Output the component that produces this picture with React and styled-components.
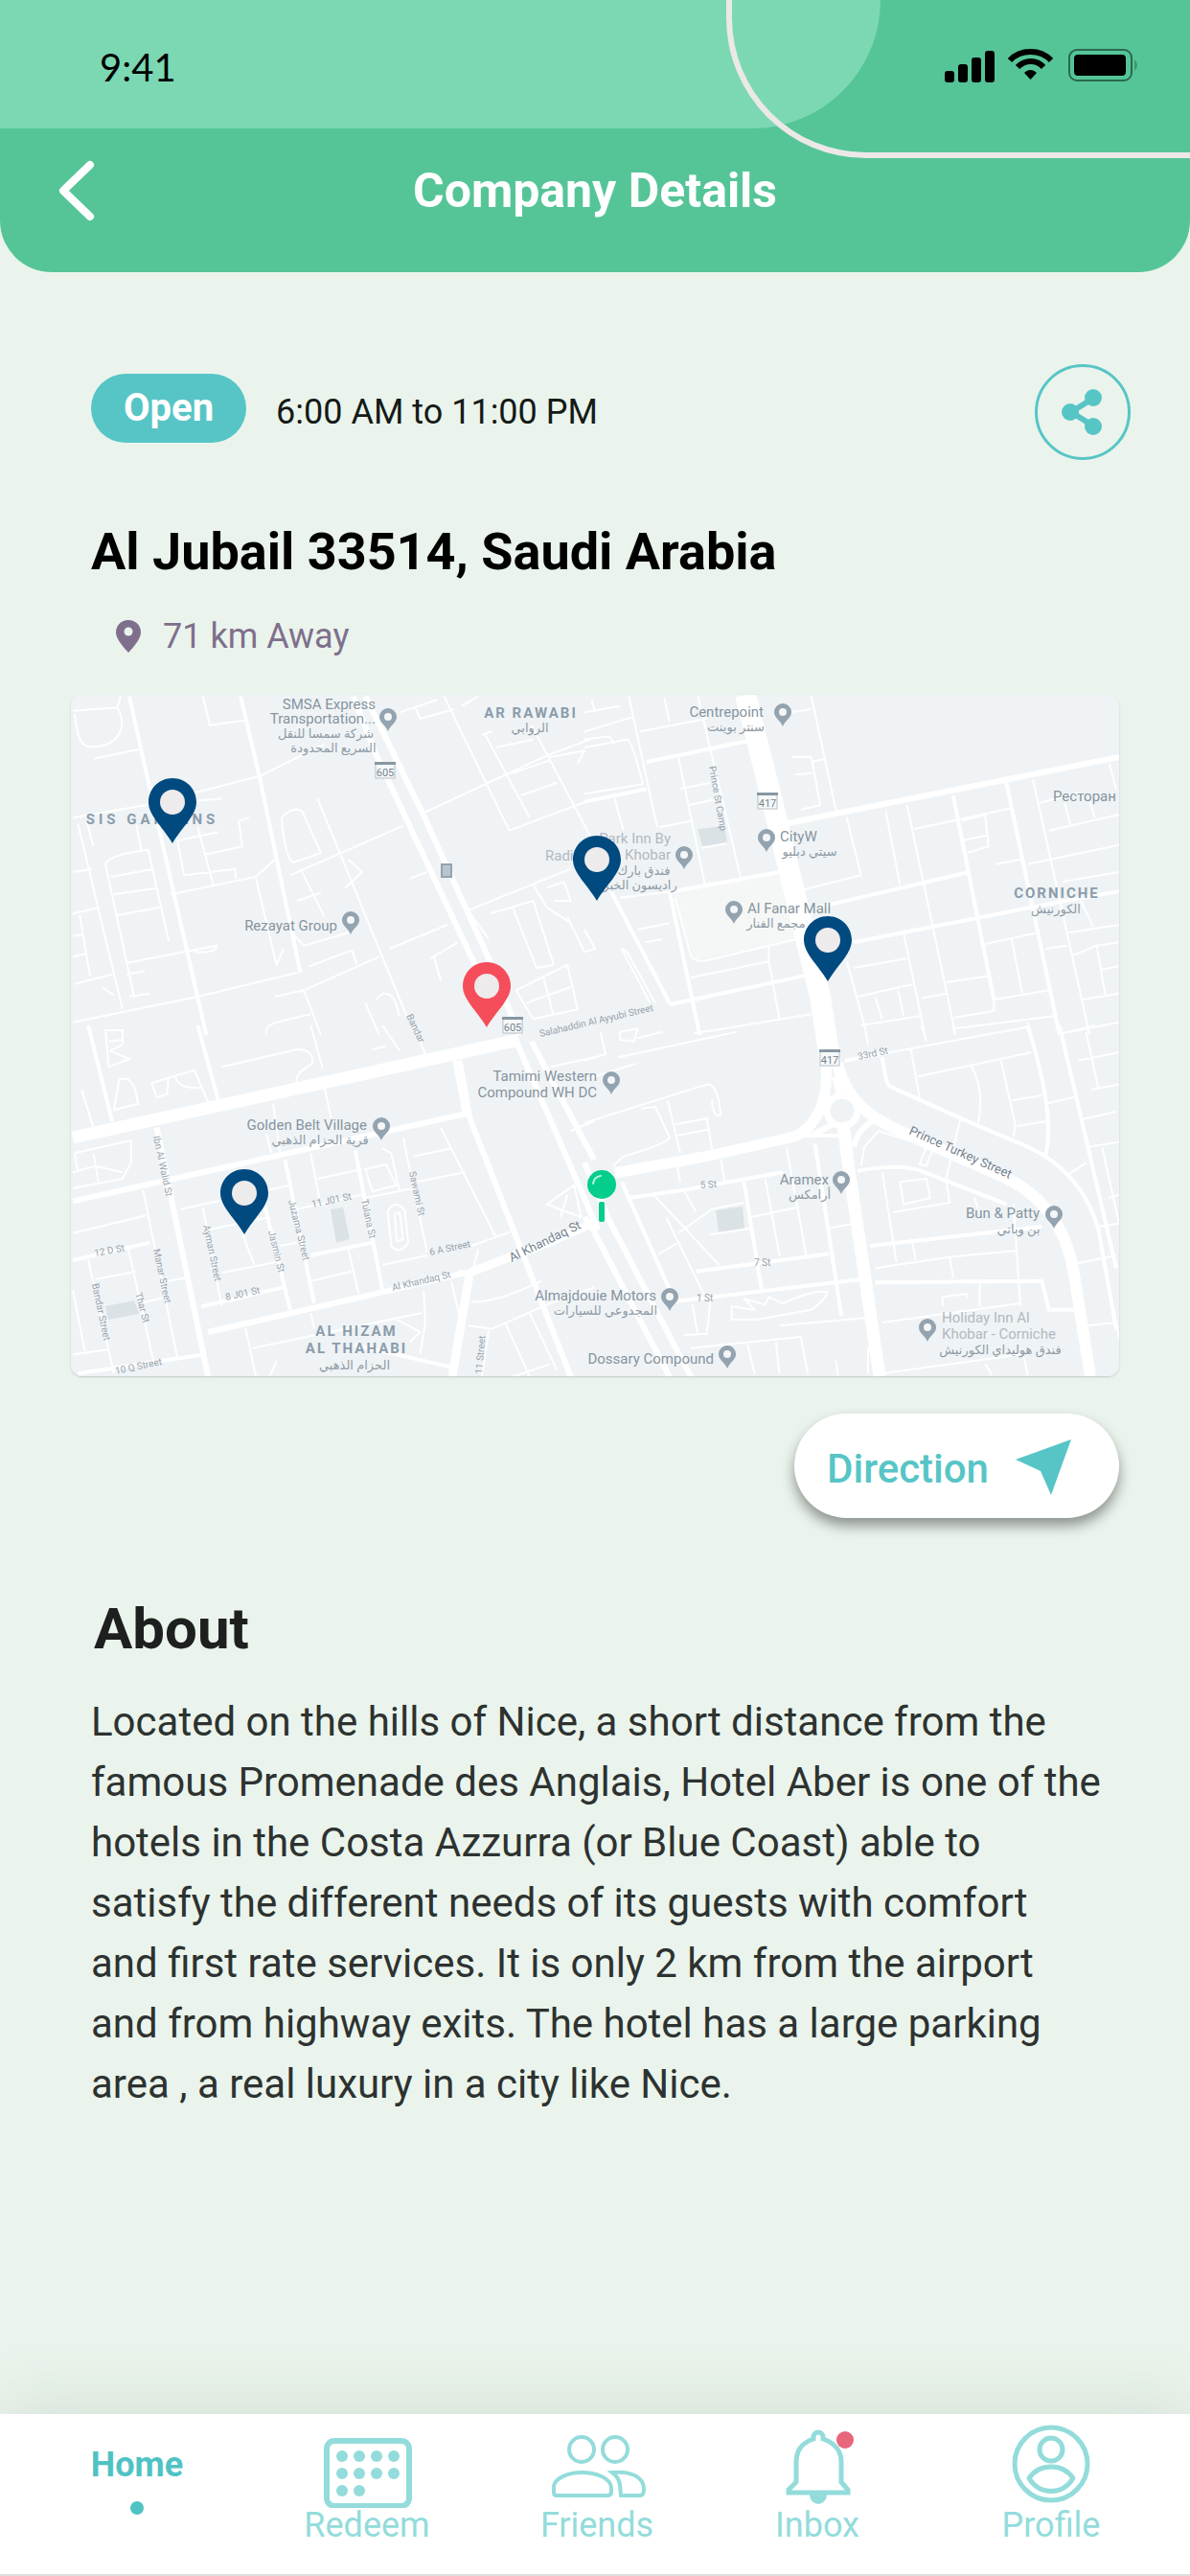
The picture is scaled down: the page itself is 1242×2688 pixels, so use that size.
import React from "react";
import styled, { createGlobalStyle } from "styled-components";

const navItems = [
  { name: "Home", active: true },
  { name: "Redeem", icon: <RedeemIcon /> },
  { name: "Friends", icon: <FriendsIcon /> },
  { name: "Inbox", icon: <InboxIcon /> },
  { name: "Profile", icon: <ProfileIcon /> },
];

function App() {
  return (
    <>
      <GlobalStyle />
      <Page>
        <Header>
          <HeaderTint />
          <HeaderOutline />
          <StatusBar>
            <Time>9:41</Time>
            <StatusIcons />
          </StatusBar>
          <TitleBar>
            <BackButton type="button" aria-label="Back">
              <svg width="40" height="64" viewBox="0 0 40 64">
                <path d="M34 5 L6 32 L34 59" fill="none" stroke="#fff" strokeWidth="8" strokeLinecap="round" strokeLinejoin="round" />
              </svg>
            </BackButton>
            <Title>Company Details</Title>
          </TitleBar>
        </Header>

        <Main>
          <HoursRow>
            <OpenBadge>Open</OpenBadge>
            <Hours>6:00 AM to 11:00 PM</Hours>
            <ShareButton type="button" aria-label="Share">
              <svg width="44" height="50" viewBox="0 0 44 50">
                <path d="M34 10 L10 25 L34 40" fill="none" stroke="#57c5c6" strokeWidth="6" />
                <circle cx="9" cy="25" r="9" fill="#57c5c6" />
                <circle cx="33" cy="10" r="9" fill="#57c5c6" />
                <circle cx="33" cy="40" r="9" fill="#57c5c6" />
              </svg>
            </ShareButton>
          </HoursRow>

          <Address>Al Jubail 33514, Saudi Arabia</Address>
          <Distance>
            <svg width="26" height="34" viewBox="0 0 26 34">
              <path d="M13 0 C5.500 0 0 5.500 0 13 C0 21 13 34 13 34 C13 34 26 21 26 13 C26 5.500 20.500 0 13 0 Z" fill="#7f6f8c" />
              <circle cx="13" cy="12" r="4.500" fill="#eaf4ec" />
            </svg>
            71 km Away
          </Distance>

          <MapFrame>
            <CityMap />
          </MapFrame>

          <Actions>
            <DirectionButton type="button">
              <DirectionLabel>Direction</DirectionLabel>
              <svg width="58" height="58" viewBox="0 0 58 58">
                <path d="M0 21 L58 0 L37 58 L26 33 Z" fill="#57c5c6" />
              </svg>
            </DirectionButton>
          </Actions>

          <AboutTitle>About</AboutTitle>
          <AboutText>
            Located on the hills of Nice, a short distance from the famous
            Promenade des Anglais, Hotel Aber is one of the hotels in the Costa
            Azzurra (or Blue Coast) able to satisfy the different needs of its
            guests with comfort and first rate services. It is only 2 km from
            the airport and from highway exits. The hotel has a large parking
            area , a real luxury in a city like Nice.
          </AboutText>
        </Main>

        <Nav>
          {navItems.map((item) => (
            <NavLink key={item.name} href={`#${item.name.toLowerCase()}`} $active={item.active}>
              {item.icon}
              <span>{item.name}</span>
              {item.active && <ActiveDot />}
            </NavLink>
          ))}
        </Nav>
      </Page>
    </>
  );
}

function StatusIcons() {
  return (
    <svg width="206" height="40" viewBox="0 0 206 40">
      <rect x="0" y="24" width="10" height="12" rx="3" />
      <rect x="14" y="17" width="10" height="19" rx="3" />
      <rect x="28" y="10" width="10" height="26" rx="3" />
      <rect x="42" y="3" width="10" height="33" rx="3" />
      <g fill="none" stroke="#000" strokeWidth="6">
        <path d="M68 13 C79 1 100 1 111 13" />
        <path d="M76 20 C84 12 96 12 103 20" />
      </g>
      <path d="M83 26 C87 22 92 22 96 26 L89.500 33 Z" />
      <rect x="130" y="2" width="65" height="32" rx="8" fill="none" stroke="#2b6850" strokeWidth="2" />
      <rect x="135" y="7" width="54" height="22" rx="4" />
      <path d="M198 12 Q204 18 198 24 Z" fill="#3f9573" />
    </svg>
  );
}

// Roads are kept per quadrant, each with its own origin
const quadrants = [
  {
    transform: "translate(60 710) scale(0.35714 0.33333)",
    minor: `M45 95 L175 85 L185 50 M50 105 C60 200 70 215 130 205 C190 190 200 130 175 85 M105 245 L240 215
      M425 50 L445 140 L550 125 M45 430 L260 390 L590 300 L780 200 M60 450 L190 1030
      M225 995 L140 575 Q150 545 265 530 L325 815 M155 615 L280 590 M165 670 L290 650 M175 735 L300 710
      M50 950 L160 920 M45 1070 L410 990 L700 915 M200 885 L465 830 Q465 855 400 850 M330 670 L580 615 L635 560
      M45 600 L100 590 M45 730 L120 712 M65 735 L95 925 M350 500 L370 610 L520 590 L520 620 M410 460 L455 640
      M430 545 L540 520 L530 440 L560 430 M355 500 L470 475 M270 390 L480 370 M85 440 L105 520 M230 450 L245 530
      M655 430 Q690 390 715 410 L770 540 L690 570 Q665 560 655 430 M680 610 L1010 455 M760 370 L1020 1050
      M710 590 L780 740 M700 690 L770 665 M580 620 L640 890 L660 840 M850 560 L890 600 L840 650 M735 895 L860 845 L875 890
      M685 790 L720 830 L850 790 M635 990 L720 970 L940 865 M720 970 L770 1110 M610 1110 Q605 1080 640 1070 L740 1045
      M1060 420 L1430 235 L1568 180 M1130 50 L1320 470 L1568 370 M1250 170 L1380 430 M1240 170 L1270 160
      M1280 210 L1390 185 M1330 290 L1440 250 M1355 360 L1460 320 M1385 140 L1568 510 M1440 240 L1540 220 L1520 260
      M970 840 L1140 765 M1030 620 L1080 600 M1200 720 L1500 590 M1200 720 L1260 810 M1340 970 L1490 890 L1520 1030 L1390 1060 Z
      M1370 1010 L1500 960 M1420 930 L1450 1050 M1090 870 L1170 820 M1100 865 L1120 940 M1265 730 L1390 690 L1450 890 L1400 900 L1330 710
      M1390 640 L1430 710 L1500 760 M1430 650 L1480 630 L1500 690 L1450 690 M1490 740 L1540 850 M900 1010 L940 1110
      M930 1000 Q960 960 985 1000 L1000 1050 M45 800 L75 795 M45 865 L85 855 M130 960 L165 985 M200 920 L255 910 M210 990 L270 980
      M1000 100 L1110 60 M1045 85 L1060 120 L1160 90 M1180 80 L1230 50`,
    medium: "M210 50 L270 340 L330 620 L435 1110 M535 50 L590 300 L710 915",
    major: "M865 50 L930 230 L1220 890 M900 50 L1060 400 L1260 870 L1350 1110",
  },
  {
    transform: "translate(610 710) scale(0.37 0.33333)",
    minor: `M125 50 L205 460 M0 100 L100 80 M155 160 L345 120 M225 55 L240 130 M320 50 L440 615 M85 370 L110 470
      M0 210 L120 185 Q135 190 165 325 L0 355 M0 185 L70 175 L85 200 M265 240 L340 640 M270 340 L355 320 M295 390 L380 370
      M330 525 L400 510 M210 460 L300 440 M640 50 L710 410 M580 100 L640 90 M585 240 L640 240 L665 390 L610 405 M595 295 L645 290 M640 255 L680 245
      M740 430 L780 610 L600 660 M850 410 L890 640 M910 390 L1045 1100 M930 465 L1205 400 M1280 385 L1400 350 M1265 310 L1425 1110
      M1480 260 L1500 340 M1310 470 L1508 420 M1160 575 L1230 560 M1250 575 L1508 515 M1350 630 L1508 600 M1355 385 L1370 450 M1425 380 L1440 430
      M1065 440 L1130 420 L1140 520 L1080 540 M1070 500 L1135 485 M760 900 L910 870 M900 790 L960 1110 M740 880 L790 1080
      M1130 825 L1280 790 M1300 840 L1360 830 M1365 790 L1508 765 M1400 690 L1435 770 M1020 945 L1140 925 M770 990 L930 950 L950 1050 L780 1080
      M820 990 L840 1060 M885 970 L900 1050 M950 995 L1020 980 M1045 1055 L1155 1035 L1155 1000 L1310 970 M1400 1000 L1508 980
      M1380 860 L1445 830 L1508 820 M1445 830 L1470 990 M1460 905 L1508 895 M1205 810 L1235 980 M1040 1090 L1330 1050 M1250 1070 L1260 1110 M1370 1100 L1508 1070
      M310 1105 L640 1045 M300 930 L520 880 L550 1060 M520 830 L520 880 M255 680 L300 860 Q310 885 350 875 L600 810
      M185 1010 L105 840 L120 850 L200 1010 M0 500 L60 650 M100 680 L250 660 M150 780 L240 760 M170 820 L220 810 M0 850 L30 840 L0 780
      M0 160 L135 115 M20 60 L30 100`,
    medium: `M175 255 L460 190 M0 380 L175 340 M250 660 L550 600 M240 660 L325 1110 M1040 360 L1155 1000 M1190 320 L1340 1110
      M660 710 L1085 600 M760 820 L985 770 L1310 700 L1508 660 M70 650 L240 1010 M240 1015 L640 920`,
    major: "M560 450 L1508 240",
  },
  {
    transform: "translate(60 1070) scale(0.35714 0.33333)",
    minor: `M740 0 L775 135 M480 130 L700 75 Q750 75 745 120 Q690 150 700 185
      M140 15 L190 15 L190 60 L155 80 L210 105 L150 130 Z M150 50 L190 45 M180 170 Q225 150 235 245 L165 265 Z
      M275 180 L400 140 L440 240 M275 180 L290 225 L320 215 L325 160 M345 160 Q350 200 425 195 M70 200 L105 320 M950 0 L1000 80 M920 75 L960 65
      M1040 0 L1075 90 M780 195 L800 290 M630 245 L650 400 M610 340 L625 400 M50 400 L215 360 L215 430 L190 480 L45 510 M50 400 L60 460 M45 460 L110 440 L190 460
      M105 400 L120 490 M250 515 L350 1040 M45 650 L260 595 M90 735 L165 1090 M205 690 L280 1050 M110 795 L230 770
      M240 870 L320 850 M320 800 L380 790 M360 575 L680 500 M425 570 L480 880 M440 640 L620 600 M480 775 L640 740
      M740 400 L765 540 M760 480 L890 450 M700 575 L890 530 M650 690 L700 680 M850 700 L880 840 M740 800 L860 770
      M540 650 L575 750 M1010 350 L1080 710 M1120 320 L1280 660 M1040 410 L1150 385 M1050 490 L1190 460
      M900 540 L1040 510 M900 450 L960 435 L990 500 L920 520 Z M950 385 L975 400 L1000 520 M965 580 Q990 540 1015 580 L1025 680 Q1000 720 975 690 Z M985 590 L1000 585 L1010 670 L992 675 Z
      M950 750 L1080 720 M1210 690 L1340 640 M1230 700 L1215 760 M1210 865 Q1280 870 1415 800 M1200 940 L1270 950 L1440 870 L1568 820
      M1310 935 L1380 1100 M1380 900 L1460 1080 M550 950 L580 1100 M570 1010 L1065 900 M740 900 L750 950 M1070 830 L1075 930 L1060 1030
      M1150 800 L1180 930 M990 920 L1060 960 L1030 990 M620 1100 L640 1050 M45 1030 L150 1015 M45 830 L80 1020
      M1330 1100 L1440 1060 M1430 560 L1510 500 L1530 600 Z M1450 570 L1510 590 M1490 530 L1470 600 M1500 330 L1568 300 M1440 130 L1568 100 M1260 955 L1240 1100`,
    medium: `M90 0 L160 300 M410 0 L470 235 M665 420 L750 870 M870 390 L950 830 M600 540 L680 890 M45 735 L270 680 M740 720 L920 680
      M420 880 L660 820 M60 1090 L430 1030 M1160 110 L1190 280 M870 1000 L1150 1070`,
    major: "M290 320 L440 1100 M45 550 L1200 275 M1175 110 L1205 290 L1500 1100 M440 960 L950 835 L1210 770 M1345 60 L1580 640 M1385 50 L1568 420 M1170 775 L1210 775",
  },
  {
    transform: "translate(610 1070) scale(0.37 0.33333)",
    minor: `M95 100 L430 20 M0 110 L60 90 L45 20 M0 170 L145 120 M100 20 L150 10 L140 50 L100 45 Z M150 40 L220 20 M0 305 L345 185 Q375 180 385 280 Q360 290 360 230
      M160 260 L200 255 L240 350 Q235 370 110 410 L80 440 M235 235 L270 400 M255 310 L350 290 M260 345 L355 325 M345 290 L360 390
      M260 430 L270 490 M385 420 L395 490 M195 530 L380 750 M280 515 L315 585 M265 650 L360 575 L450 555 M510 480 L550 720 M570 380 L600 570 L470 600
      M355 655 L470 635 M600 560 L625 720 M690 635 L760 620 M210 715 L265 680 M230 600 L345 860
      M415 880 L415 920 L490 920 L640 890 Q680 860 685 835 Q650 825 560 870 L520 850 L510 875 L450 855 L480 890 Z
      M550 940 L800 915 M355 865 L345 965 L280 970 M305 875 L320 970 M300 1010 L610 975 L630 1090 M460 1000 L480 1090 M540 990 L550 1090
      M860 85 L1250 5 M790 0 L800 60 M920 70 L945 225 M950 0 L965 50 M940 160 L1260 85 M1040 0 L1045 30 M1090 125 Q1130 200 1110 310 M1175 110 L1215 310 L1210 350 M1415 20 L1450 200
      M1350 25 L1440 0 M1390 110 L1508 85 M1205 235 L1290 220 M1300 245 L1380 225 M1220 315 L1305 300 M1400 295 L1500 270 M1430 200 L1508 185 M1420 380 L1508 365 M1360 470 L1415 430
      M1060 295 L1020 480 L1030 555 L870 585 M840 460 L880 740 M820 760 L1030 725 L1220 705 M1210 560 L1230 880 M925 680 L935 735
      M840 930 L1230 870 M1115 800 L1115 880 M1030 725 L1040 790 M1390 745 L1500 720 M1450 630 L1508 620 M1420 940 L1500 930 M1460 380 L1508 620
      M890 490 L965 480 L975 540 L900 560 Z M985 380 L965 440 L945 435 L965 380 M780 440 L790 380 L830 330 L980 385 M840 1090 L1230 1030 M800 1090 L800 1010 L830 1000
      M1010 880 L1010 850 L1080 840 L1080 855 M1100 540 L1110 570 M1480 540 L1508 530 M1480 820 L1508 980 M1130 1060 L1150 1095 M1240 1040 L1250 1095 M710 1050 L715 1095`,
    medium: `M125 540 L280 515 L560 460 M105 490 L245 840 M450 490 L500 830 M650 370 L725 910 M600 345 L720 345 M315 770 L690 715 M250 865 L780 795
      M735 110 L860 85 M840 100 Q850 180 860 190 L1060 290 L1250 380 C1350 430 1420 520 1450 640 L1500 950 M1250 0 Q1330 280 1300 410 M1340 0 L1500 760
      M770 455 Q900 430 960 460 L1190 560 M805 690 L1290 630 M820 805 L1290 800 L1310 890 L1380 890`,
    major: "M0 600 L20 630 L240 1100 M0 430 L70 610 L300 1100 M640 345 L700 310 M760 380 C770 330 800 300 840 290 M705 160 L720 220",
  },
];

const poiPins = [
  [405, 750], [366, 962], [714, 894], [817, 745], [800, 876], [766, 951], [638, 1129],
  [398, 1177], [878, 1233], [1100, 1269], [699, 1355], [759, 1415], [968, 1387],
];

const places = [
  { x: 392, y: 740, end: true, text: "SMSA Express" },
  { x: 392, y: 755, end: true, text: "Transportation..." },
  { x: 352, y: 971, end: true, text: "Rezayat Group" },
  { x: 700, y: 880, end: true, faint: true, text: "Park Inn By" },
  { x: 569, y: 898, faint: true, text: "Radisson" },
  { x: 700, y: 897, end: true, faint: true, text: "Khobar" },
  { x: 797, y: 748, end: true, text: "Centrepoint" },
  { x: 814, y: 878, text: "CityW" },
  { x: 780, y: 953, text: "Al Fanar Mall" },
  { x: 1099, y: 836, text: "Ресторан" },
  { x: 623, y: 1128, end: true, text: "Tamimi Western" },
  { x: 623, y: 1145, end: true, text: "Compound WH DC" },
  { x: 383, y: 1179, end: true, text: "Golden Belt Village" },
  { x: 865, y: 1236, end: true, text: "Aramex" },
  { x: 1085, y: 1271, end: true, text: "Bun & Patty" },
  { x: 685, y: 1357, end: true, text: "Almajdouie Motors" },
  { x: 745, y: 1423, end: true, text: "Dossary Compound" },
  { x: 983, y: 1380, faint: true, text: "Holiday Inn Al" },
  { x: 983, y: 1397, faint: true, text: "Khobar - Corniche" },
];

// x is the centre of the line
const arabicPlaces = [
  { x: 340, y: 770, text: "شركة سمسا للنقل" },
  { x: 348, y: 785, text: "السريع المحدودة" },
  { x: 553, y: 764, text: "الروابي" },
  { x: 768, y: 763, text: "سنتر بوينت" },
  { x: 672, y: 913, text: "فندق بارك" },
  { x: 668, y: 928, text: "راديسون الخبر" },
  { x: 845, y: 893, text: "سيتي دبليو" },
  { x: 810, y: 968, text: "مجمع الفنار" },
  { x: 1102, y: 953, text: "الكورنيش" },
  { x: 334, y: 1194, text: "قرية الحزام الذهبي" },
  { x: 845, y: 1251, text: "أرامكس" },
  { x: 1063, y: 1287, text: "بن وباتي" },
  { x: 632, y: 1372, text: "المجدوعي للسيارات" },
  { x: 370, y: 1429, text: "الحزام الذهبي" },
  { x: 1044, y: 1413, text: "فندق هوليداي الكورنيش" },
];

const districts = [
  { x: 554, y: 749, text: "AR RAWABI" },
  { x: 159, y: 860, wide: true, text: "SIS GARDENS" },
  { x: 1103, y: 937, text: "CORNICHE" },
  { x: 372, y: 1394, text: "AL HIZAM" },
  { x: 372, y: 1412, text: "AL THAHABI" },
];

const streets = [
  { x: 564, y: 1082, angle: -13, text: "Salahaddin Al Ayyubi Street" },
  { x: 534, y: 1317, angle: -26, big: true, text: "Al Khandaq St" },
  { x: 410, y: 1347, angle: -13, text: "Al Khandaq St" },
  { x: 948, y: 1183, angle: 24, big: true, text: "Prince Turkey Street" },
  { x: 740, y: 800, angle: 80, text: "Prince St Camp" },
  { x: 160, y: 1186, angle: 78, text: "Ibn Al Walid St" },
  { x: 212, y: 1279, angle: 78, text: "Ayman Street" },
  { x: 280, y: 1285, angle: 76, text: "Jasmin St" },
  { x: 301, y: 1253, angle: 76, text: "Juzama Street" },
  { x: 377, y: 1252, angle: 78, text: "Tulana St" },
  { x: 427, y: 1223, angle: 78, text: "Sawami St" },
  { x: 160, y: 1304, angle: 78, text: "Manar Street" },
  { x: 96, y: 1340, angle: 78, text: "Bandar Street" },
  { x: 141, y: 1350, angle: 74, text: "Thar St" },
  { x: 424, y: 1060, angle: 65, text: "Bandar" },
  { x: 503, y: 1434, angle: -85, text: "11 Street" },
  { x: 99, y: 1311, angle: -10, text: "12 D St" },
  { x: 326, y: 1260, angle: -12, text: "11 J01 St" },
  { x: 236, y: 1357, angle: -12, text: "8 J01 St" },
  { x: 449, y: 1310, angle: -12, text: "6 A Street" },
  { x: 121, y: 1434, angle: -12, text: "10 Q Street" },
  { x: 896, y: 1106, angle: -12, text: "33rd St" },
  { x: 731, y: 1240, angle: -4, text: "5 St" },
  { x: 787, y: 1321, angle: 0, text: "7 St" },
  { x: 727, y: 1358, angle: 0, text: "1 St" },
];

const shields = [
  { x: 402, y: 804, text: "605" },
  { x: 535, y: 1070, text: "605" },
  { x: 801, y: 836, text: "417" },
  { x: 866, y: 1104, text: "417" },
];

const markers = [
  { x: 180, y: 812, color: "#014a80" },
  { x: 623, y: 872, color: "#014a80" },
  { x: 864, y: 956, color: "#014a80" },
  { x: 255, y: 1220, color: "#014a80" },
  { x: 508, y: 1004, color: "#f64d5b" },
];

function CityMap() {
  return (
    <MapSvg viewBox="74 725 1094 711" role="img" aria-label="Map of Al Khobar">
      <rect x="74" y="725" width="1094" height="711" fill="#eff3f5" />
      <path d="M702 930 L814 910 L832 980 L725 1002 Z" fill="#f5f7f6" />
      <g fill="#dbe2e5">
        <path d="M728 865 L756 862 L759 880 L733 883 Z" />
        <path d="M345 1262 L358 1260 L365 1293 L351 1297 Z" />
        <path d="M110 1363 L140 1357 L145 1371 L113 1377 Z" />
        <path d="M747 1263 L775 1259 L777 1282 L750 1286 Z" />
      </g>
      <g fill="none" stroke="#fff" strokeLinejoin="round">
        {quadrants.map((q) => (
          <g key={q.transform} transform={q.transform}>
            <Road d={q.minor} $width={2} />
            <Road d={q.medium} $width={4} />
            <Road d={q.major} $width={6} />
          </g>
        ))}
        {/* arterials */}
        <path d="M76 1187 L542 1085" strokeWidth="13" />
        <path d="M778 725 L802 820 L856 1040 L867 1110" strokeWidth="22" />
        <path d="M862 1110 C866 1155 846 1182 825 1187 L740 1206 L642 1224" strokeWidth="11" />
        <path d="M874 1110 C884 1150 908 1166 943 1182 L1043 1226 C1092 1247 1114 1285 1121 1330 L1138 1436" strokeWidth="12" />
        <path d="M880 1172 L886 1220 L918 1436" strokeWidth="13" />
        <path d="M492 1327 L574 1296 L622 1275" strokeWidth="9" />
        <path d="M490 1330 L472 1436" strokeWidth="9" />
        <circle cx="879" cy="1159" r="16" fill="#eff3f5" strokeWidth="7" />
      </g>

      {poiPins.map(([x, y]) => (
        <g key={`${x}-${y}`} transform={`translate(${x} ${y})`}>
          <path d="M0 13 C-3 6 -9 4 -9 -2 A9 9 0 0 1 9 -2 C9 4 3 6 0 13 Z" fill="#93a3af" />
          <circle cy="-2" r="4" fill="#f4f6f8" />
        </g>
      ))}
      <rect x="461" y="902" width="10" height="13" fill="#b9c4cc" stroke="#93a3af" strokeWidth="2" />
      {shields.map((s) => (
        <g key={`${s.x}-${s.y}`}>
          <rect x={s.x - 10} y={s.y - 8} width="20" height="16" fill="#f6f8f9" stroke="#b4c0c8" />
          <rect x={s.x - 11} y={s.y - 9} width="22" height="3" fill="#8797a3" />
          <ShieldText x={s.x} y={s.y + 6}>{s.text}</ShieldText>
        </g>
      ))}

      {places.map((p) => (
        <PlaceText key={p.text} x={p.x} y={p.y} $end={p.end} $faint={p.faint}>{p.text}</PlaceText>
      ))}
      {arabicPlaces.map((p) => (
        <ArabicText key={p.text} x={p.x} y={p.y}>{p.text}</ArabicText>
      ))}
      {districts.map((d) => (
        <DistrictText key={d.text} x={d.x} y={d.y} $wide={d.wide}>{d.text}</DistrictText>
      ))}
      {streets.map((s) => (
        <StreetText key={`${s.x}-${s.y}`} transform={`translate(${s.x} ${s.y}) rotate(${s.angle})`} $big={s.big}>
          {s.text}
        </StreetText>
      ))}

      {markers.map((m) => (
        <g key={`${m.x}-${m.y}`} transform={`translate(${m.x} ${m.y})`}>
          <path d="M0 0 C-14 0 -25 11 -25 25 C-25 39 -10 51 0 68 C10 51 25 39 25 25 C25 11 14 0 0 0 Z" fill={m.color} />
          <circle cy="25" r="13" fill="#eeebec" />
        </g>
      ))}
      <g transform="translate(628 1236)">
        <circle r="15" fill="#05cd8b" />
        <path d="M-9 -1 Q-8 -8 -1 -9" fill="none" stroke="#b5f3dc" strokeWidth="2" strokeLinecap="round" />
        <rect x="-3" y="18" width="6" height="21" rx="2" fill="#05cd8b" />
      </g>
    </MapSvg>
  );
}

function RedeemIcon() {
  return (
    <NavSvg viewBox="-52 0 104 90">
      <rect x="-42" y="20" width="86" height="68" rx="8" strokeWidth="6" />
      <g fill="currentColor" stroke="none">
        {[-26, -8, 10, 28].map((x) => <circle key={x} cx={x} cy="36" r="6" />)}
        {[-26, -8, 10, 28].map((x) => <circle key={x} cx={x} cy="54" r="6" />)}
        {[-26, -8].map((x) => <circle key={x} cx={x} cy="72" r="6" />)}
      </g>
    </NavSvg>
  );
}

function FriendsIcon() {
  return (
    <NavSvg viewBox="-52 0 104 90" strokeWidth="4">
      <circle cx="-16" cy="29" r="13" />
      <circle cx="19" cy="29" r="13" />
      <path d="M-45 74 V67 C-43 58 -29 53 -16 53 C-2 53 15 58 15 70 V73 Q15 77 11 77 H-42 Q-45 77 -45 74 Z" />
      <path d="M16 53 C36 51 49 58 49 70 Q49 77 45 77 H25 C24 70 26 60 16 53 Z" />
    </NavSvg>
  );
}

function InboxIcon() {
  return (
    <NavSvg viewBox="-52 0 104 90" strokeWidth="5">
      <path d="M-30 74 V71 L-22 63 V42 C-22 28 -13 21 -4 18 V16 A5 5 0 0 1 6 16 V18 C15 21 25 28 25 42 V63 L32 71 V74 Z" />
      <path d="M-8 76 A9 10 0 0 0 10 76 Z" fill="currentColor" stroke="none" />
      <circle cx="29" cy="19" r="9" fill="#e8667a" stroke="none" />
    </NavSvg>
  );
}

function ProfileIcon() {
  return (
    <NavSvg viewBox="-52 0 104 90" strokeWidth="5">
      <circle cx="0" cy="44" r="38" />
      <circle cx="0" cy="29" r="12" />
      <path d="M-23 59 C-12 43 12 43 23 59 C12 77 -12 77 -23 59 Z" strokeLinejoin="round" />
    </NavSvg>
  );
}

const GlobalStyle = createGlobalStyle`
  * {
    box-sizing: border-box;
  }
  body {
    margin: 0;
    background: #eaf4ec;
    font-family: Roboto, "DejaVu Sans", sans-serif;
  }
  button {
    padding: 0;
    border: none;
    background: none;
    font-family: inherit;
    cursor: pointer;
  }
`;

const Page = styled.div`
  display: flex;
  flex-direction: column;
  min-height: 100vh;
`;
const Header = styled.header`
  position: relative;
  overflow: hidden;
  background: #55c597;
  border-radius: 0 0 54px 54px;
`;
const HeaderTint = styled.div`
  position: absolute;
  top: 0;
  left: 0;
  width: 74%;
  height: 134px;
  background: #7bd8b3;
  border-bottom-right-radius: 134px;
`;
const HeaderOutline = styled.div`
  position: absolute;
  top: -20px;
  right: 0;
  width: 39%;
  height: 185px;
  border: solid #ece8e8;
  border-width: 0 0 6px 6px;
  border-bottom-left-radius: 146px;
`;
const StatusBar = styled.div`
  position: relative;
  display: flex;
  justify-content: space-between;
  align-items: center;
  height: 134px;
  padding: 6px 50px 0 104px;
`;
const Time = styled.span`
  font-family: Lato, sans-serif;
  font-size: 40px;
  color: #000;
`;
const TitleBar = styled.div`
  position: relative;
  display: grid;
  grid-template-columns: 40px 1fr 40px;
  align-items: center;
  height: 150px;
  padding: 0 60px 20px;
`;
const BackButton = styled.button`
  display: flex;
`;
const Title = styled.h1`
  margin: 0;
  font-size: 50px;
  font-weight: 700;
  text-align: center;
  color: #fff;
`;
const Main = styled.main`
  flex: 1;
  padding: 96px 74px 0;
`;
const HoursRow = styled.div`
  display: flex;
  align-items: center;
  margin-right: -12px;
  padding-left: 21px;
`;
const OpenBadge = styled.span`
  margin-bottom: 8px;
  padding: 0 34px;
  border-radius: 36px;
  background: #57c5c6;
  font-size: 40px;
  font-weight: 700;
  line-height: 72px;
  color: #fff;
`;
const Hours = styled.span`
  margin-left: 31px;
  font-size: 36px;
  color: #141a17;
`;
const ShareButton = styled.button`
  display: flex;
  justify-content: center;
  align-items: center;
  width: 100px;
  height: 100px;
  margin-left: auto;
  border: 3px solid #57c5c6;
  border-radius: 50%;
`;
const Address = styled.h2`
  margin: 66px 0 36px;
  padding-left: 21px;
  font-size: 54px;
  font-weight: 700;
  line-height: 60px;
  color: #000;
`;
const Distance = styled.p`
  display: flex;
  align-items: center;
  gap: 23px;
  margin: 0 0 39px;
  padding-left: 47px;
  font-size: 36px;
  line-height: 44px;
  color: #7f6f8c;
`;
const MapFrame = styled.div`
  overflow: hidden;
  border-radius: 12px;
  box-shadow: 0 1px 2px rgba(90, 110, 110, 0.3);
`;
const MapSvg = styled.svg`
  display: block;
  width: 100%;
`;
const Road = styled.path`
  stroke-width: ${(props) => props.$width}px;
  vector-effect: non-scaling-stroke;
`;
const PlaceText = styled.text`
  font-size: 15px;
  fill: ${(props) => (props.$faint ? "#b3b9c1" : "#8794a0")};
  text-anchor: ${(props) => (props.$end ? "end" : "start")};
`;
const ArabicText = styled.text`
  font-size: 13px;
  fill: #8f9ba6;
  text-anchor: middle;
`;
const DistrictText = styled.text`
  font-size: 15px;
  font-weight: 700;
  letter-spacing: ${(props) => (props.$wide ? "4px" : "2px")};
  fill: #8b9cab;
  text-anchor: middle;
`;
const StreetText = styled.text`
  font-size: ${(props) => (props.$big ? "13px" : "10px")};
  fill: ${(props) => (props.$big ? "#75828f" : "#97a2ad")};
`;
const ShieldText = styled.text`
  font-size: 11px;
  fill: #75848f;
  text-anchor: middle;
`;
const Actions = styled.div`
  display: flex;
  justify-content: flex-end;
  margin-top: 39px;
`;
const DirectionButton = styled.button`
  display: flex;
  align-items: center;
  gap: 28px;
  height: 109px;
  padding: 2px 50px 0 34px;
  border-radius: 55px;
  background: #fff;
  box-shadow: 0 8px 14px rgba(0, 0, 0, 0.4);
  color: #57c5c6;
`;
const DirectionLabel = styled.span`
  padding-top: 4px;
  font-size: 42px;
  font-weight: 500;
`;
const AboutTitle = styled.h2`
  margin: 82px 0 31px;
  padding-left: 24px;
  font-size: 60px;
  font-weight: 700;
  line-height: 68px;
  color: #1e1f1f;
`;
const AboutText = styled.p`
  margin: 0;
  padding: 0 18px 0 21px;
  font-size: 42px;
  line-height: 63px;
  color: #2d3230;
`;
const Nav = styled.nav`
  display: grid;
  grid-template-columns: 60fr 60fr 60fr 55fr 67fr;
  height: 169px;
  padding: 8px 11px 0 23px;
  background: #fff;
  border-bottom: 2px solid #dedede;
  box-shadow: 0 -10px 70px rgba(90, 110, 95, 0.14);
`;
const NavLink = styled.a`
  display: flex;
  flex-direction: column;
  align-items: center;
  padding-top: ${(props) => (props.$active ? "27px" : "0")};
  font-size: 36px;
  font-weight: ${(props) => (props.$active ? "700" : "400")};
  line-height: 36px;
  color: ${(props) => (props.$active ? "#4fc3c4" : "#93dcdb")};
  text-decoration: none;
`;
const ActiveDot = styled.span`
  width: 14px;
  height: 14px;
  margin-top: 20px;
  border-radius: 50%;
  background: #4fc3c4;
`;
const NavSvg = styled.svg`
  width: 104px;
  height: 90px;
  fill: none;
  stroke: currentColor;
`;

export default App;
